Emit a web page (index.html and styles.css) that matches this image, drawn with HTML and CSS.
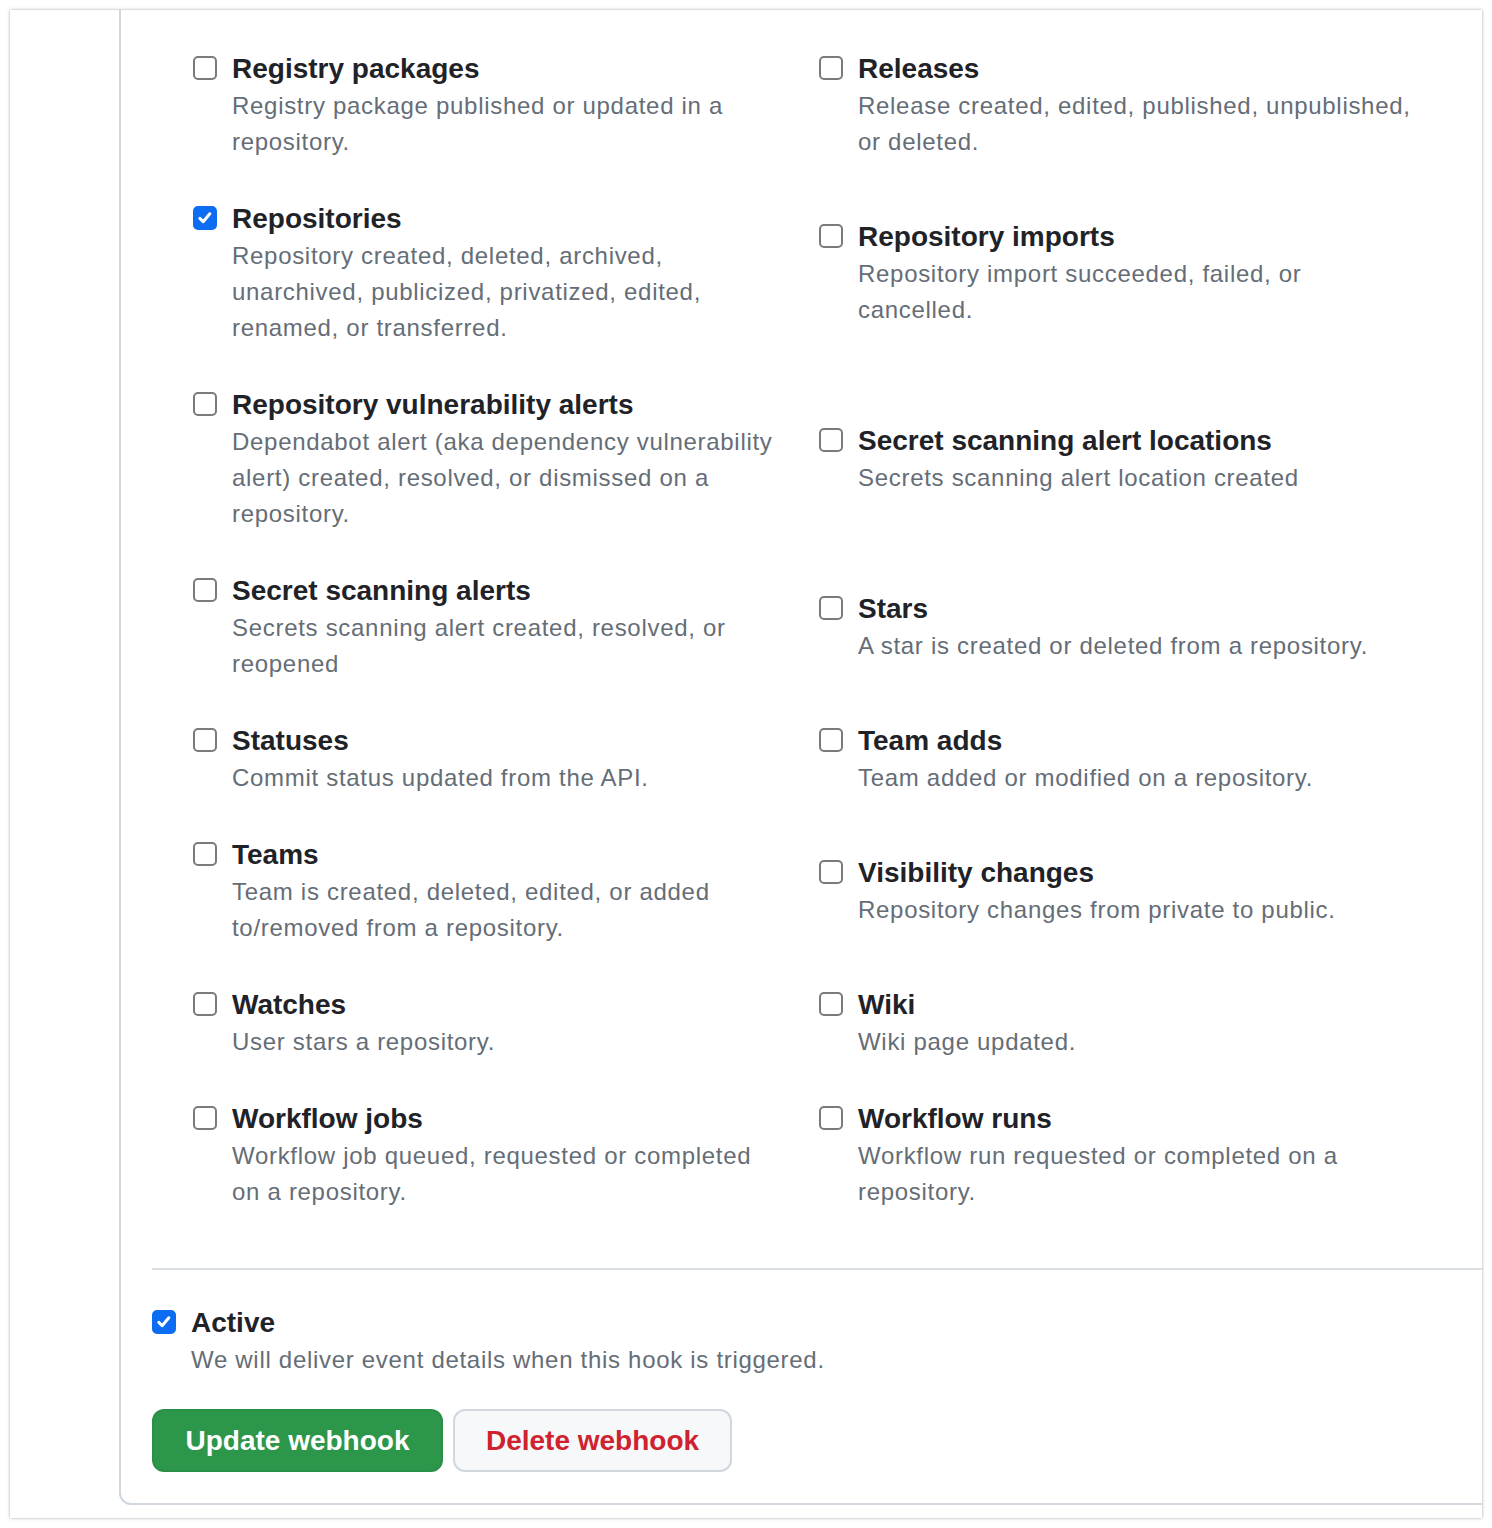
FILE: index.html
```html
<!DOCTYPE html>
<html>
<head>
<meta charset="utf-8">
<link rel="stylesheet" href="styles.css">
</head>
<body>
<div class="frame">
  <div class="box">
    <div class="events">
      <label class="item"><span class="cb"></span><span class="txt"><span class="title">Registry packages</span><span class="desc">Registry package published or updated in a repository.</span></span></label>
      <label class="item"><span class="cb"></span><span class="txt"><span class="title">Releases</span><span class="desc">Release created, edited, published, unpublished, or deleted.</span></span></label>
      <label class="item"><span class="cb on"><svg viewBox="0 0 24 24"><path d="M5.8 12.4l4 4.1 8-9.6" /></svg></span><span class="txt"><span class="title">Repositories</span><span class="desc">Repository created, deleted, archived, unarchived, publicized, privatized, edited, renamed, or transferred.</span></span></label>
      <label class="item"><span class="cb"></span><span class="txt"><span class="title">Repository imports</span><span class="desc">Repository import succeeded, failed, or cancelled.</span></span></label>
      <label class="item"><span class="cb"></span><span class="txt"><span class="title">Repository vulnerability alerts</span><span class="desc">Dependabot alert (aka dependency vulnerability alert) created, resolved, or dismissed on a repository.</span></span></label>
      <label class="item"><span class="cb"></span><span class="txt"><span class="title">Secret scanning alert locations</span><span class="desc">Secrets scanning alert location created</span></span></label>
      <label class="item"><span class="cb"></span><span class="txt"><span class="title">Secret scanning alerts</span><span class="desc">Secrets scanning alert created, resolved, or reopened</span></span></label>
      <label class="item"><span class="cb"></span><span class="txt"><span class="title">Stars</span><span class="desc">A star is created or deleted from a repository.</span></span></label>
      <label class="item"><span class="cb"></span><span class="txt"><span class="title">Statuses</span><span class="desc">Commit status updated from the API.</span></span></label>
      <label class="item"><span class="cb"></span><span class="txt"><span class="title">Team adds</span><span class="desc">Team added or modified on a repository.</span></span></label>
      <label class="item"><span class="cb"></span><span class="txt"><span class="title">Teams</span><span class="desc">Team is created, deleted, edited, or added to/removed from a repository.</span></span></label>
      <label class="item"><span class="cb"></span><span class="txt"><span class="title">Visibility changes</span><span class="desc">Repository changes from private to public.</span></span></label>
      <label class="item"><span class="cb"></span><span class="txt"><span class="title">Watches</span><span class="desc">User stars a repository.</span></span></label>
      <label class="item"><span class="cb"></span><span class="txt"><span class="title">Wiki</span><span class="desc">Wiki page updated.</span></span></label>
      <label class="item"><span class="cb"></span><span class="txt"><span class="title">Workflow jobs</span><span class="desc">Workflow job queued, requested or completed on a repository.</span></span></label>
      <label class="item"><span class="cb"></span><span class="txt"><span class="title">Workflow runs</span><span class="desc">Workflow run requested or completed on a repository.</span></span></label>
    </div>
    <div class="divider"></div>
    <label class="item active"><span class="cb on"><svg viewBox="0 0 24 24"><path d="M5.8 12.4l4 4.1 8-9.6" /></svg></span><span class="txt"><span class="title">Active</span><span class="desc">We will deliver event details when this hook is triggered.</span></span></label>
    <div class="actions">
      <button class="btn btn-primary">Update webhook</button>
      <button class="btn btn-danger">Delete webhook</button>
    </div>
  </div>
</div>
</body>
</html>
```

FILE: styles.css
```css
html, body {
  margin: 0;
  padding: 0;
  background: #ffffff;
}
body {
  font-family: "Liberation Sans", Arial, sans-serif;
  color: #1f2328;
}
.frame {
  margin: 10px;
  width: 1472px;
  height: 1508px;
  background: #ffffff;
  box-shadow: 0 0 3px rgba(0, 0, 0, 0.35);
  overflow: hidden;
}
.box {
  margin-left: 109px;
  width: 1500px;
  height: 1495px;
  box-sizing: border-box;
  border-left: 2px solid #d0d7de;
  border-bottom: 2px solid #d0d7de;
  border-bottom-left-radius: 12px;
  padding: 39px 0 0 31px;
}
.events {
  margin-left: 41px;
  display: grid;
  grid-template-columns: 626px 626px;
  row-gap: 39px;
  align-items: center;
}
.item {
  display: flex;
  align-items: flex-start;
}
.cb {
  flex: none;
  width: 24px;
  height: 24px;
  box-sizing: border-box;
  border: 2px solid #7b7b7b;
  border-radius: 5px;
  margin-top: 7px;
  margin-right: 15px;
  background: #fff;
  display: flex;
  align-items: center;
  justify-content: center;
}
.cb.on {
  background: #0c6cf2;
  border-color: #0c6cf2;
}
.cb svg {
  width: 22px;
  height: 22px;
}
.cb svg path {
  fill: none;
  stroke: #ffffff;
  stroke-width: 3.6;
  stroke-linecap: round;
  stroke-linejoin: round;
}
.txt {
  display: flex;
  flex-direction: column;
  width: 548px;
}
.events .item:nth-child(even) .txt {
  width: 556px;
}
.title {
  font-size: 28px;
  font-weight: 700;
  line-height: 40px;
  color: #1f2328;
}
.desc {
  font-size: 24px;
  line-height: 36px;
  letter-spacing: 0.7px;
  color: #656d76;
  margin-top: -1px;
}
.divider {
  margin-top: 58px;
  border-top: 2px solid #d8dee4;
}
.active {
  margin-top: 33px;
}
.active .txt {
  width: 1000px;
}
.actions {
  margin-top: 31px;
  display: flex;
  gap: 10px;
}
.btn {
  font-family: inherit;
  font-size: 28px;
  font-weight: 700;
  height: 63px;
  border-radius: 12px;
  padding: 0;
  white-space: nowrap;
  box-sizing: border-box;
  cursor: pointer;
  display: flex;
  align-items: center;
  justify-content: center;
}
.btn-primary {
  width: 291px;
  background: #2c974b;
  border: 2px solid #2a8f47;
  color: #ffffff;
}
.btn-danger {
  width: 279px;
  background: #f6f8fa;
  border: 2px solid #d0d7de;
  color: #cf222e;
}
```
